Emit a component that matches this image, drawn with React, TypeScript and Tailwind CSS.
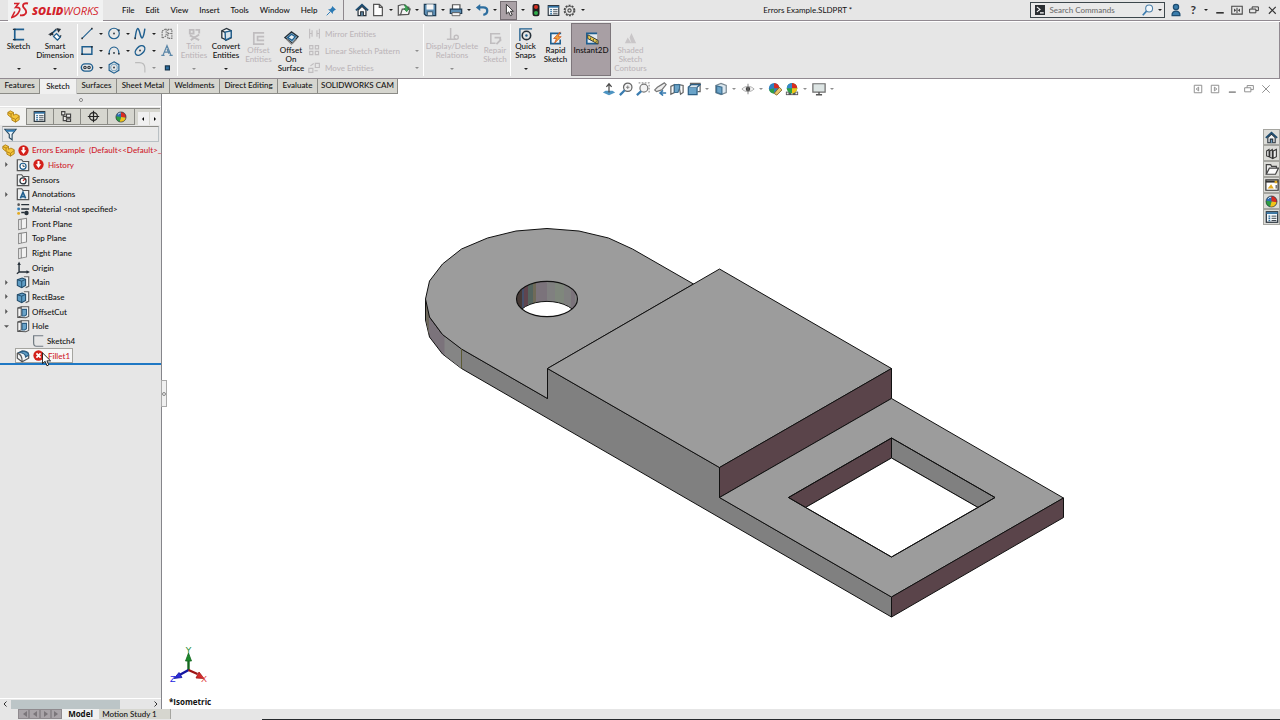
import type { ReactNode } from "react";

const BLUE = "#1f5f8f";
const DARK = "#27313a";
const FADE = "#c0bdbf";

function Icon({ children, className = "h-[14px] w-[14px]" }: { children: ReactNode; className?: string }) {
  return (
    <svg viewBox="0 0 16 16" fill="none" strokeWidth="1.4" aria-hidden="true" className={`shrink-0 ${className}`}>
      {children}
    </svg>
  );
}

function Caret({ faded = false }: { faded?: boolean }) {
  return (
    <svg viewBox="0 0 4 2" aria-hidden="true" className="h-[2px] w-1 shrink-0">
      <path d="M0 0h4L2 2z" fill={faded ? "#8f8f8f" : "#202020"} />
    </svg>
  );
}

/* ---------- shared drawings ---------- */

const Home = ({ className }: { className?: string }) => (
  <Icon className={className}>
    <path d="M3.500 8v6.500h9V8L8 3.800z" fill="#f7f7f7" stroke={DARK} />
    <path d="M1 8.500L8 2l7 6.500" stroke="#1d4c70" strokeWidth="2" />
    <path d="M6.500 14.500v-4.500h3v4.500" fill="#6f9fc0" stroke={DARK} />
  </Icon>
);

const Globe = ({ className }: { className?: string }) => (
  <Icon className={className}>
    <circle cx="8" cy="8" r="6.800" fill="#2c6fb5" />
    <path d="M8 8V1.200A6.800 6.800 0 0 1 14.600 9z" fill="#d92b20" />
    <path d="M8 8l6.600 1A6.800 6.800 0 0 1 6 14.500z" fill="#f0c419" />
    <path d="M8 8l-2 6.500A6.800 6.800 0 0 1 1.300 7z" fill="#2f9e44" />
    <path d="M4 4.500a5 5 0 0 1 3.500-2" stroke="#fff" strokeWidth="1.200" />
    <circle cx="8" cy="8" r="6.800" stroke="#333" strokeWidth=".8" />
  </Icon>
);

const Part = ({ className }: { className?: string }) => (
  <Icon className={className}>
    <path d="M1 6V3l3-2 4 2v3.500L11 5l4 2v5l-4.500 3L6 12.500V10z" fill="#f5c53a" stroke="#a87710" strokeWidth="1" />
    <path d="M1 3l4 2v4M5 5l3-2M6 9.500l4.500 2V15M10.500 11.500L15 8" stroke="#a87710" strokeWidth="1" />
  </Icon>
);

const ListIcon = ({ className }: { className?: string }) => (
  <Icon className={className}>
    <rect x="1.500" y="2" width="13" height="12" fill="#f4f8fb" stroke={DARK} />
    <path d="M1.500 3.500h13" stroke="#2d6e9f" strokeWidth="2" />
    <path d="M4 7h2M4 9.500h2M4 12h2" stroke="#2d6e9f" strokeWidth="1.600" />
    <path d="M7.500 7H13M7.500 9.500H13M7.500 12H13" stroke={DARK} strokeWidth="1" />
  </Icon>
);

/* ---------- title bar ---------- */

function Logo() {
  return (
    <div className="flex h-[21px] w-[95px] shrink-0 items-center bg-[#f1f2f2] pl-[3px]" aria-label="SOLIDWORKS">
      <svg viewBox="0 0 18 18" className="h-[18px] w-[18px]" fill="none" stroke="#d3232b" strokeWidth="1.600" aria-hidden="true">
        <path d="M3 2.500h4.500L4.500 6.500c4-.5 5 1 3.800 3.600C7 13.200 4 15.500.8 16.500l3-6" />
        <path d="M17 2.500c-3-.8-5.200.4-5 2.600.3 2.400 3.600 3.200 3.200 6-.3 2.600-3.200 3.700-6.200 3.100" strokeWidth="1.900" />
      </svg>
      <span className="ml-[3px] font-['Open_Sans',sans-serif] text-[11px] italic leading-none text-[#d3232b]">
        <b className="font-extrabold">SOLID</b>WORKS
      </span>
    </div>
  );
}

const menus = ["File", "Edit", "View", "Insert", "Tools", "Window", "Help"];

function QuickButton({ label, caret, active, children }: { label: string; caret?: boolean; active?: boolean; children: ReactNode }) {
  return (
    <div className="flex h-full items-center gap-1">
      <button aria-label={label} className={`flex h-[19px] items-center justify-center ${active ? "w-[17px] border border-[#766f74] bg-[#aaa1a6]" : "w-[15px]"}`}>
        {children}
      </button>
      {caret && <Caret />}
    </div>
  );
}

function TitleBar() {
  return (
    <header className="flex h-[21px] shrink-0 items-center border-b border-[#918a91] bg-[#e6e6e6]">
      <div className="w-2 shrink-0" />
      <Logo />
      <nav className="ml-[19px] flex w-[204px] shrink-0 items-center gap-[11px]">
        {menus.map((m) => (
          <button key={m} className="leading-none">{m}</button>
        ))}
      </nav>
      <button aria-label="Pin menu">
        <Icon className="h-[11px] w-[11px]">
          <path d="M9 1.500l5.500 5.500-2 .5-2.500 2.500v3L3 6h3l2.500-2.500z" fill="#2d7bb5" />
          <path d="M6.500 9.500L1 15" stroke="#2d7bb5" />
        </Icon>
      </button>
      <div className="ml-[6px] h-full w-px bg-[#8d878c]" />
      <div className="ml-[10px] flex h-full shrink-0 items-center gap-[1px]">
        <QuickButton label="Home"><Home className="h-[14px] w-[14px]" /></QuickButton>
        <div className="flex h-full items-center gap-[3px]">
          <QuickButton label="New" caret>
            <Icon><path d="M3 1.500h6.500L13 5v9.500H3z" fill="#fdfdfd" stroke="#555" /><path d="M9.500 1.500V5H13" stroke="#555" /></Icon>
          </QuickButton>
          <QuickButton label="Open" caret>
            <Icon>
              <path d="M1.500 3v11l3-1 9-.5V5l-3-.5L9 2H5z" fill="#eee" stroke="#555" />
              <path d="M4 13.500L6 7h9l-2 6z" fill="#f3f3f3" stroke="#555" />
              <path d="M8 2.500c3 0 4 1 4 4h2L11 10 8 6.500h2" fill="#3aa655" stroke="#237a38" strokeWidth=".8" />
            </Icon>
          </QuickButton>
          <QuickButton label="Save" caret>
            <Icon>
              <path d="M1.500 1.500h13v13h-11l-2-2z" fill="#5d8fb5" stroke="#1f3d55" />
              <path d="M4 1.500h8v6H4z" fill="#f6f6f6" /><path d="M5 10h6v4.500H5z" fill="#dfe6ea" stroke="#1f3d55" strokeWidth=".8" />
            </Icon>
          </QuickButton>
          <QuickButton label="Print" caret>
            <Icon>
              <path d="M4 7V2h8.500v5" fill="#fff" stroke="#555" />
              <path d="M1.500 7h13v5h-13z" fill="#5d8fb5" stroke="#1f3d55" />
              <path d="M3.500 11h9v3.500h-9z" fill="#f4f4f4" stroke="#555" strokeWidth="1" />
            </Icon>
          </QuickButton>
          <QuickButton label="Undo" caret>
            <Icon><path d="M5 5h4.500c6 0 6 7.500 0 8.500" stroke="#2d6e9f" strokeWidth="2.600" /><path d="M1 5l5-4v8z" fill="#2d6e9f" /></Icon>
          </QuickButton>
          <QuickButton label="Select" caret active>
            <Icon><path d="M5 1.500v11l2.600-2.300 2 4.300 2-1-2-4H13z" fill="#fff" stroke="#333" strokeWidth="1.100" /></Icon>
          </QuickButton>
          <QuickButton label="Rebuild">
            <Icon><rect x="4" y="1" width="8" height="14" rx="2.500" fill="#202020" /><circle cx="8" cy="4.500" r="2.300" fill="#d62f22" /><circle cx="8" cy="11.300" r="2.300" fill="#2fae4b" /></Icon>
          </QuickButton>
          <QuickButton label="File properties"><ListIcon className="h-[13px] w-[13px]" /></QuickButton>
        </div>
        <QuickButton label="Options" caret>
          <Icon className="h-[13px] w-[13px]">
            <circle cx="8" cy="8" r="6.200" stroke="#4c4c4c" strokeWidth="2" strokeDasharray="2.500 1.400" />
            <circle cx="8" cy="8" r="5" fill="#ececec" stroke="#4c4c4c" strokeWidth="1" /><circle cx="8" cy="8" r="2" stroke="#4c4c4c" />
          </Icon>
        </QuickButton>
      </div>
      <h1 className="flex-1 whitespace-nowrap text-center font-normal leading-none">Errors Example.SLDPRT *</h1>
      <div className="flex shrink-0 items-center">
        <label className="flex h-4 w-[135px] items-center border border-[#3d474c] bg-[#e9e9e9] pl-1 pr-[2px]">
          <Icon className="h-[10px] w-[10px]"><rect width="16" height="16" fill="#2b2f33" /><path d="M3 3l5 4-5 4M8 12.500h6" stroke="#fff" strokeWidth="1.800" /></Icon>
          <input placeholder="Search Commands" aria-label="Search Commands" className="ml-1 w-0 flex-1 bg-transparent leading-none outline-none placeholder:text-[#6e6e6e]" />
          <Icon className="mr-1 h-3 w-3"><circle cx="9.500" cy="6" r="4.600" fill="#f2f8fc" stroke="#4d7fa8" /><path d="M6 9.500L1 15" stroke="#3a7cb0" strokeWidth="2.200" /></Icon>
          <Caret />
        </label>
        <button aria-label="Account" className="ml-1">
          <Icon className="h-[14px] w-[14px]"><circle cx="8" cy="4.500" r="3" fill="#3a7cab" stroke="#1d4c70" /><path d="M3.500 14.500c-1-7 10-7 9 0z" fill="#3a7cab" stroke="#1d4c70" /></Icon>
        </button>
        <button aria-label="Help" className="ml-[7px] text-[12px] font-bold leading-none text-[#333]">?</button>
        <span className="ml-2"><Caret /></span>
        <div className="ml-[7px] mr-[3px] flex items-center gap-[6px]">
          <button aria-label="Minimize"><Icon className="h-[10px] w-[10px]"><path d="M2 12.500h12" stroke="#333" strokeWidth="2.600" /></Icon></button>
          <button aria-label="Span displays"><Icon className="h-3 w-3"><path d="M1 3h14v10.500H1zM8 5v7" stroke="#444" /><path d="M7 8.300L4 6v4.600zM9 8.300L12 6v4.600z" fill="#444" /></Icon></button>
          <button aria-label="Restore"><Icon className="h-[10px] w-[10px]"><path d="M5 6V3h10v6h-4M1 6.500h10v6H1z" stroke="#333" strokeWidth="1.500" /></Icon></button>
          <button aria-label="Close" className="ml-[2px]"><Icon className="h-[10px] w-[10px]"><path d="M3 3l11 11M14 3L3 14" stroke="#333" strokeWidth="1.800" /></Icon></button>
        </div>
      </div>
    </header>
  );
}

/* ---------- ribbon ---------- */

type CommandProps = {
  lines: string[];
  width: string;
  low?: boolean;
  caret?: boolean;
  disabled?: boolean;
  active?: boolean;
  children: ReactNode;
};

function Command({ lines, width, low, caret, disabled, active, children }: CommandProps) {
  return (
    <button
      disabled={disabled}
      className={`flex h-full shrink-0 flex-col items-center ${width} ${low ? "pt-2" : "pt-1"} ${
        active ? "bg-[#a89fa4] ring-1 ring-inset ring-[#7d767b]" : ""
      } ${disabled ? "text-[#bdb6ba]" : ""}`}
    >
      <Icon className="h-[15px] w-[15px]">{children}</Icon>
      <span className="flex flex-col whitespace-nowrap text-center leading-[9px]">
        {lines.map((l) => (
          <span key={l}>{l}</span>
        ))}
      </span>
      {caret && <span className="mt-auto pb-[6px]"><Caret faded={disabled} /></span>}
    </button>
  );
}

const Divider = () => <div className="h-[52px] w-px shrink-0 self-center bg-white" />;

const B = { stroke: BLUE, strokeWidth: 1.4 };
const Dot = ({ x, y }: { x: number; y: number }) => <rect x={x - 1} y={y - 1} width="2" height="2" fill={DARK} />;

const tools: { name: string; caret?: boolean; faded?: boolean; art: ReactNode }[] = [
  { name: "Line", caret: true, art: <><path d="M2 14L14 2" {...B} /><Dot x={2} y={14} /><Dot x={14} y={2} /></> },
  { name: "Circle", caret: true, art: <><circle cx="8" cy="8" r="6.500" {...B} /><Dot x={8} y={8} /><Dot x={14} y={4} /></> },
  { name: "Spline", caret: true, art: <><path d="M2 14C4-2 6 0 8 8s4 8 6-6" {...B} strokeWidth="1.800" /><Dot x={2} y={14} /></> },
  { name: "Plane", art: <path d="M2 5l5-3v9l-5 3zM9 3h5v11H9M9 3v11M9 8h5" stroke="#777" strokeDasharray="2 1" /> },
  { name: "Rectangle", caret: true, art: <><path d="M2 3.500h12v9H2z" {...B} strokeWidth="1.800" /><Dot x={2} y={12.5} /><Dot x={14} y={3.5} /></> },
  { name: "Arc", caret: true, art: <><path d="M2 12C2 1 14 1 14 12" {...B} /><Dot x={2} y={12} /><Dot x={14} y={12} /><Dot x={8} y={11} /></> },
  { name: "Ellipse", caret: true, art: <><ellipse cx="8" cy="8" rx="7" ry="4.500" transform="rotate(-45 8 8)" {...B} strokeWidth="1.800" /><Dot x={8} y={8} /></> },
  { name: "Text", art: <path d="M1 14h4M11 14h4M3 14L8 2l5 12M5 10h6M10.500 12L8 6" stroke="#5c87a8" strokeWidth="1.500" /> },
  { name: "Slot", caret: true, art: <><rect x="1" y="3.500" width="14" height="9" rx="4.500" {...B} strokeWidth="1.700" /><circle cx="5.500" cy="8" r="1.500" stroke={DARK} /><circle cx="10.500" cy="8" r="1.500" stroke={DARK} /></> },
  { name: "Polygon", art: <><path d="M8 1l6 3.500v7L8 15l-6-3.500v-7z" {...B} /><circle cx="8" cy="8" r="4" stroke="#7fa9c6" /><Dot x={8} y={8} /></> },
  { name: "Fillet", caret: true, faded: true, art: <path d="M2 2h5c5 0 7 3 7 7v5" stroke="#bbb" /> },
  { name: "Point", art: <rect x="6" y="6" width="5" height="5" fill="#2d6e9f" stroke="#16334a" /> },
];

function Ribbon() {
  return (
    <section aria-label="Sketch commands" className="flex h-[58px] shrink-0 border-b border-[#918a91] bg-[#e6e6e6] py-[2px] shadow-[inset_0_1px_0_#fff,inset_-1px_0_0_#918a91]">
      <Command lines={["Sketch"]} width="w-[37px]" caret>
        <path d="M14 2.500H4v11h10" {...B} strokeWidth="1.800" /><path d="M2 2.500h3M2 13.500h3" stroke={DARK} />
      </Command>
      <Command lines={["Smart", "Dimension"]} width="w-9" caret>
        <path d="M2 9L9 2M14 9l-4 5" stroke={DARK} /><path d="M3 8l6-5M9 7l4 4-3 3-4-4z" {...B} fill="#fff" /><path d="M0 8l5-3 1 4zM9 1l5 1-3 4z" fill={DARK} />
      </Command>
      <div className="ml-1 flex"><Divider /></div>
      <div className="ml-[2px] grid shrink-0 grid-cols-[27px_26px_27px_16px] grid-rows-3 pt-[2px]">
        {tools.map((t) => (
          <button key={t.name} aria-label={t.name} className="flex items-center gap-[5px]">
            <Icon className="h-[13px] w-[14px]">{t.art}</Icon>
            {t.caret && <Caret faded={t.faded} />}
          </button>
        ))}
      </div>
      <div className="ml-px flex"><Divider /></div>
      <Command lines={["Trim", "Entities"]} width="w-8" caret disabled>
        <path d="M3 3h4v4H3zM9 3h4v4M3 9l10 5M13 8L4 14" stroke={FADE} strokeWidth="2" />
      </Command>
      <Command lines={["Convert", "Entities"]} width="w-8" caret>
        <path d="M3 4l5-2.500L13 4v7.500L8 14l-5-2.500z" fill="#f4f4f4" stroke={DARK} /><path d="M3 4l4 2v8M7 6l6-2" stroke={DARK} /><path d="M6.500 5.500L13 4v7l-6 3z" fill="#d9e3ea" stroke={BLUE} />
      </Command>
      <Command lines={["Offset", "Entities"]} width="w-[33px]" low disabled>
        <path d="M14 2H3v12h11M14 6H7v4h7" stroke={FADE} strokeWidth="1.800" />
      </Command>
      <Command lines={["Offset", "On", "Surface"]} width="w-8" low>
        <path d="M1 7l7-6 7 5-6 7z" fill="#9cc0d8" stroke={DARK} /><path d="M4 7l4-3.500L12 6 8.500 10z" fill="#e9f1f6" stroke={BLUE} /><path d="M3 9l5 5 5-5" stroke="#888" />
      </Command>
      <ul className="ml-[1px] grid w-[115px] shrink-0 grid-rows-3 pt-[2px] text-[#bdb6ba]">
        {["Mirror Entities", "Linear Sketch Pattern", "Move Entities"].map((t, i) => (
          <li key={t}>
            <button disabled className="flex h-full w-full items-center pr-1">
              <Icon className="h-[13px] w-[13px]">
                {i === 0 && <path d="M2 2v12M2 8h3M5 4v8M14 2v12M14 8h-3M11 4v8" stroke={FADE} />}
                {i === 1 && <path d="M2 2h4v4H2zM9 2h4v4H9zM2 9h4v4H2zM9 9h4v4H9z" stroke={FADE} />}
                {i === 2 && <path d="M1 9h5v5H1zM9 3h5v5H9zM3 6l4-3M12 12H8" stroke={FADE} />}
              </Icon>
              <span className="ml-1 whitespace-nowrap leading-none">{t}</span>
              {i > 0 && <span className="ml-auto"><Caret faded /></span>}
            </button>
          </li>
        ))}
      </ul>
      <Divider />
      <Command lines={["Display/Delete", "Relations"]} width="w-[56px]" caret disabled>
        <path d="M6 1v12M2 13h10" stroke={FADE} strokeWidth="1.600" /><circle cx="12" cy="11" r="2.200" stroke={FADE} />
      </Command>
      <Command lines={["Repair", "Sketch"]} width="w-[30px]" low disabled>
        <path d="M13 3H3v10h5" stroke={FADE} strokeWidth="1.700" /><path d="M7 7h6v4M9 14l5-5" stroke={FADE} strokeWidth="2" />
      </Command>
      <Divider />
      <Command lines={["Quick", "Snaps"]} width="w-[29px]" caret>
        <path d="M2 15V2h13" {...B} /><circle cx="9" cy="9" r="4.500" stroke={DARK} strokeWidth="1.700" /><circle cx="9" cy="9" r="1.300" fill={BLUE} />
      </Command>
      <Command lines={["Rapid", "Sketch"]} width="w-[31px]" low>
        <path d="M14 2.500H3v11h10V9" {...B} strokeWidth="1.700" fill="#f3f7fa" /><path d="M13 1L6 8h3l-2 5 7-7h-3z" fill="#f2a23a" stroke="#c8501b" strokeWidth=".8" />
      </Command>
      <Command lines={["Instant2D"]} width="w-10" low active>
        <path d="M14 2.500H3v11h11" fill="#e3eaef" {...B} strokeWidth="1.700" /><path d="M4 4l11 6v4L4 8z" fill="#f3d04a" stroke={DARK} strokeWidth="1" /><path d="M7 7v2M10 8.500v2M13 10v2" stroke={DARK} strokeWidth=".8" />
      </Command>
      <Command lines={["Shaded", "Sketch", "Contours"]} width="w-[39px]" low disabled>
        <path d="M2 13l3-6 4 6zM9 2l5 11H9L7 7z" fill="#c9c6c8" />
      </Command>
    </section>
  );
}

/* ---------- tab strip and view toolbar ---------- */

const tabs: [string, string][] = [
  ["Features", "w-10"],
  ["Sketch", "w-[37px]"],
  ["Surfaces", "w-10"],
  ["Sheet Metal", "w-[53px]"],
  ["Weldments", "w-[50px]"],
  ["Direct Editing", "w-[58px]"],
  ["Evaluate", "w-10"],
  ["SOLIDWORKS CAM", "w-[80px]"],
];

const views: { name: string; caret?: boolean; art: ReactNode }[] = [
  { name: "Normal to", art: <><path d="M1 12l3-2h8l3 2-7 3z" fill="#4d94c2" /><path d="M8 12V3M5 5.500L8 2l3 3.500" stroke="#4a4a4a" /></> },
  { name: "Zoom to fit", art: <><circle cx="10" cy="6" r="4.800" fill="#f4f4f4" stroke="#666" /><path d="M6.500 9.500L1 15" stroke="#3a7cb0" strokeWidth="2.600" /><path d="M8 6h4M10 4v4" stroke="#777" strokeWidth="1" /></> },
  { name: "Zoom to area", art: <><path d="M3 1h12v12" stroke="#999" strokeDasharray="2 1.500" /><circle cx="9" cy="7" r="4.500" fill="#f4f4f4" stroke="#777" /><path d="M6 10.500L1 15" stroke="#3a7cb0" strokeWidth="2.600" /></> },
  { name: "Previous view", art: <><path d="M13 1l2 2-5 6-6 2-2-2 3-3z" fill="#eee" stroke="#777" /><path d="M15 12.500H9m2.500-3L8 12.500l3.500 3" stroke="#3a7cb0" strokeWidth="1.800" /></> },
  { name: "Section view", art: <><path d="M1 5l4-2v9l-4 2zM10 3l5 1v8l-3 2z" fill="#fafafa" stroke="#666" /><path d="M5 3h6v4L9 12H5z" fill="#6aa3c8" stroke="#3f6f90" /></> },
  { name: "View orientation", caret: true, art: <><path d="M4 5V1.500h11V11h-3" fill="#fff" stroke="#666" /><path d="M1.500 6h10v8.500h-10z" fill="#6aa3c8" stroke="#2d5f85" /><path d="M1.500 6L5 3h10l-3.500 3" fill="#dce8f0" stroke="#2d5f85" /></> },
  { name: "Display style", caret: true, art: <><path d="M2 4l6-2.500L14 4v8l-6 2.500L2 12z" fill="#dce8f0" stroke="#7b8a94" /><path d="M3 4.500L9 6v8l-6-2z" fill="#6aa3c8" stroke="#3f6f90" /></> },
  { name: "Hide and show", caret: true, art: <><path d="M1 8c4-4 10-4 14 0-4 4-10 4-14 0z" fill="#f4f4f4" stroke="#a5a5a5" strokeWidth="1" /><circle cx="8" cy="8" r="2.600" fill="#444" /><path d="M8 2v12" stroke="#777" strokeWidth="1" /></> },
  { name: "Edit appearance", art: <><circle cx="7" cy="7" r="6" fill="#2f7fc1" /><path d="M7 7V1a6 6 0 0 1 6 6z" fill="#d92b20" /><path d="M7 7L1.200 8.500A6 6 0 0 0 7 13z" fill="#2f9e44" /><path d="M7 13l6-7 3 3-6 6z" fill="#e9c46a" stroke="#7b6424" strokeWidth="1" /></> },
  { name: "Apply scene", caret: true, art: <><path d="M1 11h14v4H1z" fill="#555" /><path d="M2 13h2M7 13h2M12 13h2" stroke="#eee" strokeWidth="2" /><circle cx="8" cy="7" r="6" fill="#2f9e44" /><path d="M8 7V1a6 6 0 0 1 6 6z" fill="#d92b20" /><path d="M8 7V1a6 6 0 0 0-6 6z" fill="#3487cc" /><path d="M8 7h6a6 6 0 0 1-6 6z" fill="#f0c419" /></> },
  { name: "View settings", caret: true, art: <><path d="M1 2h14v9.500H1z" fill="#dde5e4" stroke="#6d6d6d" /><path d="M8 11.500V14M4.500 14.500h7" stroke="#555" strokeWidth="1.600" /></> },
];

function TabStrip() {
  return (
    <div className="relative z-10 flex h-[15px] shrink-0">
      <nav className="flex shrink-0" role="tablist">
        {tabs.map(([t, w]) => (
          <button
            key={t}
            role="tab"
            aria-selected={t === "Sketch"}
            className={`${w} whitespace-nowrap border-r pb-[2px] text-center leading-none ${
              t === "Sketch" ? "border-[#c9c9c9] bg-[#f0f0f0]" : "border-b border-[#8b8b86] bg-[#d6d6cf]"
            }`}
          >
            {t}
          </button>
        ))}
      </nav>
      <div className="ml-[204px] flex items-start pt-[3px]">
        {views.map((v) => (
          <button key={v.name} aria-label={v.name} className={`flex items-center gap-1 ${v.caret ? "w-[27px]" : "w-[17px]"}`}>
            <Icon>{v.art}</Icon>
            {v.caret && <Caret faded />}
          </button>
        ))}
      </div>
      <div className="ml-auto flex items-start gap-[7px] pr-[9px] pt-[5px]">
        {[
          ["Collapse left", "M2 2h12v12H2zM9 5L5 8l4 3z"],
          ["Collapse right", "M2 2h12v12H2zM7 5l4 3-4 3z"],
          ["Minimize document", "M3 12.500h11M3 13.500h11"],
          ["Restore document", "M5 6V2.500h10V9h-4M1 6h10v6.500H1z"],
          ["Close document", "M2 2l12 12M14 2L2 14"],
        ].map(([n, d]) => (
          <button key={n} aria-label={n}>
            <Icon className="h-[10px] w-[10px]"><path d={d} stroke="#8c8c8c" strokeWidth="1.500" /></Icon>
          </button>
        ))}
      </div>
    </div>
  );
}

/* ---------- feature tree ---------- */

const Folder = ({ children }: { children: ReactNode }) => (
  <Icon><path d="M1.500 2h5l1.500 2h6.500v10.500h-13z" fill="#eef0f1" stroke="#555" />{children}</Icon>
);
const Plane = () => <Icon><path d="M3 3l9-1.500v11L3 14.500zM6 2.500V14" fill="#f2f2f2" stroke="#888" strokeWidth="1.200" /></Icon>;
const Body = () => (
  <Icon>
    <path d="M9 2h5.500v11L11 14.500" fill="#f5f5f5" stroke="#666" />
    <path d="M1.500 5.500L7 3.500l4 1.500v7l-4.500 2.500L1.500 12z" fill="#5e9cc4" stroke="#1f4968" strokeWidth="1.200" /><path d="M1.500 5.500L6.500 7v7.500M6.500 7L11 5" stroke="#1f4968" strokeWidth="1" />
  </Icon>
);
const Cut = () => (
  <Icon>
    <path d="M2 3.500L6 2v10.500L2 14zM6 2h8.500v11L11 14.500 2 14" fill="#f5f5f5" stroke="#555" strokeWidth="1.200" />
    <path d="M7 5h5v6l-2 1.500H7z" fill="#6aa3c8" stroke="#2d5f85" strokeWidth="1.200" /><path d="M2 3.500h4" stroke="#555" />
  </Icon>
);
const RebuildMark = () => <Icon className="h-[11px] w-[11px]"><circle cx="8" cy="8" r="7.500" fill="#d3201a" /><path d="M6.500 3h3v4.500H12L8 13 4 7.500h2.500z" fill="#fff" /></Icon>;
const ErrorMark = () => <Icon className="h-[11px] w-[11px]"><circle cx="8" cy="8" r="7.500" fill="#d3201a" /><path d="M5 5l6 6M11 5l-6 6" stroke="#fff" strokeWidth="2.600" /></Icon>;

type Row = { name: string; icon: ReactNode; mark?: ReactNode; arrow?: "closed" | "open"; red?: boolean; indent?: boolean; picked?: boolean };

const rows: Row[] = [
  { name: "History", arrow: "closed", red: true, mark: <RebuildMark />, icon: <Folder><circle cx="8" cy="9.500" r="3.500" fill="#fff" stroke={BLUE} /><path d="M8 7.500v2h2" stroke={DARK} strokeWidth="1" /></Folder> },
  { name: "Sensors", icon: <Folder><circle cx="8" cy="9" r="3.500" fill="#fff" stroke={DARK} /><path d="M8 9l2.500-2.500" stroke="#d3201a" /></Folder> },
  { name: "Annotations", arrow: "closed", icon: <Folder><path d="M5 13l3-7 3 7M6 11h4" stroke={BLUE} strokeWidth="1.800" /></Folder> },
  { name: "Material <not specified>", icon: <Icon><circle cx="3" cy="3" r="1.500" fill="#555" /><circle cx="3" cy="8" r="1.700" fill="#2d7bb5" /><circle cx="3" cy="13" r="1.700" fill="#e2a91f" /><path d="M6 3h9M6 8h9M6 12h4" stroke={DARK} strokeWidth="1.700" /><circle cx="12" cy="12.500" r="2.500" fill={DARK} /></Icon> },
  { name: "Front Plane", icon: <Plane /> },
  { name: "Top Plane", icon: <Plane /> },
  { name: "Right Plane", icon: <Plane /> },
  { name: "Origin", icon: <Icon><path d="M3.500 3v9.500H13M1 14.500l2.500-2" stroke={DARK} strokeWidth="1.600" /><path d="M1.500 4.500l2-4 2 4zM12 10.500l4 2-4 2z" fill={DARK} /></Icon> },
  { name: "Main", arrow: "closed", icon: <Body /> },
  { name: "RectBase", arrow: "closed", icon: <Body /> },
  { name: "OffsetCut", arrow: "closed", icon: <Cut /> },
  { name: "Hole", arrow: "open", icon: <Cut /> },
  { name: "Sketch4", indent: true, icon: <Icon><path d="M14 2H3v8c0 3 1 4 3 4h8" stroke="#707a82" /></Icon> },
  { name: "Fillet1", red: true, picked: true, mark: <ErrorMark />, icon: <Icon><path d="M1.500 5L7 2.500c4 0 7.500 1.500 7.500 4.500v3.500L7 14.500l-5.500-4z" fill="#f1f3f4" stroke="#555" /><path d="M4 4l3-1.500c4 0 7.500 1.500 7.500 4.500L11 9C11 6 8 4.500 4 4z" fill="#5f9dc4" stroke="#2d5f85" /><path d="M1.500 5c4 .5 5.500 3 5.500 9.500" stroke="#555" /></Icon> },
];

function TreeRow({ row }: { row: Row }) {
  return (
    <li className={`relative flex items-center ${row.indent ? "pl-[30px]" : "pl-[15px]"}`}>
      {row.arrow && (
        <button aria-label={`Expand ${row.name}`} className="absolute left-1">
          <svg viewBox="0 0 4 4" className="h-[5px] w-[5px]" aria-hidden="true">
            <path d={row.arrow === "open" ? "M0 1h4L2 3z" : "M1 0l2 2-2 2z"} fill="#555" />
          </svg>
        </button>
      )}
      <button className={`flex h-full items-center gap-[2px] pr-[2px] ${row.red ? "text-[#cf202a]" : ""} ${row.picked ? "border border-[#a5a5a0] bg-[#f6f6f6]" : "border border-transparent"}`}>
        {row.icon}
        {row.mark && <span className="pl-px pr-[2px]">{row.mark}</span>}
        <span className="whitespace-nowrap leading-none">{row.name}</span>
      </button>
      {row.picked && (
        <svg viewBox="0 0 10 16" className="absolute left-[42px] top-1 z-20 h-[15px] w-[9px]" aria-hidden="true">
          <path d="M.5.5v12l3-2.500 2 5 2-1-2-4.500h4z" fill="#fff" stroke="#111" strokeWidth="1" />
        </svg>
      )}
    </li>
  );
}

function FeaturePanel() {
  return (
    <aside className="relative flex w-[162px] shrink-0 flex-col border-r border-[#85858a] bg-[#e6e6e6]">
      <div className="flex h-[13px] items-center justify-center border-b border-white">
        <span className="h-[4px] w-[4px] rounded-full border border-[#808080] bg-white" />
      </div>
      <div role="tablist" className="mt-px flex h-[17px] shrink-0 pr-[1px]">
        {[
          ["Feature tree", <Part key="p" className="h-[13px] w-[13px]" />],
          ["Properties", <ListIcon key="l" className="h-[13px] w-[13px]" />],
          ["Configurations", <Icon key="c" className="h-[13px] w-[13px]"><path d="M2 2h4v4H2zM8 5h5v4H8zM8 11h5v3H8zM4 6v7h4M4 8h4" stroke="#444" fill="#eee" /></Icon>],
          ["Dimensions", <Icon key="d" className="h-[13px] w-[13px]"><circle cx="8" cy="8" r="4.800" stroke="#222" strokeWidth="1.500" /><path d="M8 1v14M1 8h14" stroke="#222" strokeWidth="1.500" /></Icon>],
          ["Appearances", <Globe key="g" className="h-[12px] w-[12px]" />],
        ].map(([n, icon], i) => (
          <button
            key={n as string}
            role="tab"
            aria-label={n as string}
            aria-selected={i === 0}
            className={`flex items-center justify-center ${i === 0 ? "w-[26px] bg-[#f2f2f0]" : "w-[27px] border-b border-l border-t border-[#8b8b86] bg-[#d6d6cf] pr-px"}`}
          >
            {icon}
          </button>
        ))}
        <div className="flex flex-1 items-end border-l border-t border-[#8b8b86] bg-[#d6d6cf]">
          <button aria-label="Scroll tabs left" className="ml-[3px] flex h-[13px] flex-1 items-center justify-center bg-[#f0f0f0]">
            <svg viewBox="0 0 4 4" className="h-1 w-1"><path d="M3 0L1 2l2 2z" /></svg>
          </button>
          <button aria-label="Scroll tabs right" className="ml-px flex h-[13px] flex-1 items-center justify-center bg-[#f0f0f0]">
            <svg viewBox="0 0 4 4" className="h-1 w-1"><path d="M1 0l2 2-2 2z" /></svg>
          </button>
        </div>
      </div>
      <label className="mx-[2px] mt-px flex h-[16px] shrink-0 items-center border border-[#b9c0c4] border-t-[#8b8b86] bg-[#e9e9e9] pl-[1px]">
        <Icon className="h-[13px] w-[13px]"><path d="M1 1.500h14L10 8v6.500L6.500 12V8z" fill="#e8f1f7" stroke="#2b4c63" /><path d="M2 2.500h12l-2 2H4z" fill="#2d7bb5" /></Icon>
        <input aria-label="Filter" className="w-0 flex-1 bg-transparent outline-none" />
      </label>
      <ul className="mt-[1px] grid h-[220px] shrink-0 auto-rows-fr">
        <li className="flex items-center gap-[3px] whitespace-nowrap pl-[2px] text-[#cf202a]">
          <Part className="h-[13px] w-[13px]" />
          <RebuildMark />
          <span className="whitespace-pre leading-none">Errors Example  (Default&lt;&lt;Default&gt;_</span>
        </li>
        {rows.map((r) => (
          <TreeRow key={r.name} row={r} />
        ))}
      </ul>
      <div className="h-[2px] bg-[#1f78c4]" />
      <div className="mt-auto flex h-[11px] items-center border-t border-white px-[2px]">
        <button aria-label="Scroll left" className="w-[9px]"><svg viewBox="0 0 6 6" className="h-[6px] w-[6px]" fill="none" stroke="#333"><path d="M4.500.5L2 3l2.500 2.500" /></svg></button>
        <div className="h-[9px] w-[109px] bg-[#bcc5c7]" />
        <button aria-label="Scroll right" className="ml-auto"><svg viewBox="0 0 6 6" className="h-[6px] w-[6px]" fill="none" stroke="#333"><path d="M1.500.5L4 3 1.500 5.500" /></svg></button>
      </div>
      <button aria-label="Collapse panel" className="absolute -right-[6px] top-[286px] z-10 flex h-[27px] w-[6px] items-center justify-center border border-[#a9a9a9] bg-[#f0f0f0]">
        <span className="h-1 w-1 rounded-full border border-[#888]" />
      </button>
    </aside>
  );
}

/* ---------- model ---------- */

const arcTop = "461.5,349 442.5,334.500 429.500,317 425.500,299 429.500,281 442.500,264 461.500,249 487.500,238 516,231 547,228.500 579,231 608.500,238 632.500,249";

function Model() {
  return (
    <svg viewBox="162 94 1118 615" className="min-h-0 w-full flex-1" role="img" aria-label="Part model">
      <g stroke="#111" strokeWidth="1" strokeLinejoin="round">
        <polygon fill="#7b737b" points="425.500,299 429.500,317 442.500,334.500 461.500,349 461.500,368.500 442.500,354 429.500,337 425.500,320" />
        <polygon stroke="none" fill="#858585" points="444.500,336.500 461,349 461,368 444.500,355" />
        <polygon stroke="none" fill="#6d685c" points="426,301 429,317 429,335 426,320" />
        <polygon fill="#808080" points="461.500,349 547.500,398.500 547.500,368.500 719.500,467.500 719.500,497.500 891.500,597 891.500,617 461.500,368.500" />
        <polygon fill="#9c9c9c" points={`${arcTop} 693.500,284 547.500,368.500 547.500,398.500`} />
        <path d="M461.500 349v19.500" stroke="#5c5a34" />
        <polygon fill="#9c9c9c" points="547.500,368.500 719.500,269 891.500,368.500 719.500,467.500" />
        <polygon fill="#5a444a" points="719.500,467.500 891.500,368.500 891.500,398.500 719.500,497.500" />
        <polygon fill="#9c9c9c" points="719.500,497.500 891.500,398.500 1063.500,498 891.500,597" />
        <polygon fill="#5a444a" points="891.500,597 1063.500,498 1063.500,517.500 891.500,617" />
        <polygon fill="#5a444a" points="788.500,497.500 891.500,438 891.500,458 805.500,507.500" />
        <polygon fill="#808080" points="891.500,438 995,497.500 978,507.500 891.500,458" />
        <polygon fill="#fff" points="891.500,458 978,507.500 891.500,557 805.500,507.500" />
        <polygon fill="none" points="788.500,497.500 891.500,438 995,497.500 891.500,557" />
      </g>
      <clipPath id="bore"><ellipse cx="547" cy="299" rx="30.500" ry="17.600" /></clipPath>
      <g clipPath="url(#bore)">
        <path fill="#808080" d="M516 280h62v38h-62z" />
        <path fill="#463a36" d="M516 280h6v38h-6z" />
        <path fill="#46506a" d="M522 280h2v38h-2z" />
        <path fill="#5f454e" d="M524 280h4v38h-4z" />
        <path fill="#54645f" d="M528 280h5v38h-5z" />
        <path fill="#6f6a58" d="M533 280h3v38h-3z" />
        <path fill="#7b737b" d="M536 280h11v38h-11z" />
        <path fill="#7f877c" d="M555 280h9v38h-9z" />
        <path fill="#7b737b" d="M571 280h4v38h-4z" />
        <ellipse cx="547" cy="319" rx="30.500" ry="17.600" fill="#fff" stroke="#111" strokeWidth="1" />
      </g>
      <ellipse cx="547" cy="299" rx="30.500" ry="17.600" fill="none" stroke="#111" strokeWidth="1.100" />
      <g className="font-['Liberation_Sans',sans-serif] text-[9px]">
        <path d="M188.500 670v-12" stroke="#14661e" strokeWidth="2.400" />
        <path d="M188.500 653l3 8h-6z" fill="#1b8a2b" stroke="#14661e" strokeWidth=".8" />
        <path d="M188.500 670l-9 5" stroke="#1515a0" strokeWidth="2.400" />
        <path d="M174 678.500l5-6 3 5z" fill="#2b2bd8" stroke="#1515a0" strokeWidth=".8" />
        <path d="M188.500 670l9 4" stroke="#9c1515" strokeWidth="2.400" />
        <path d="M204 678.500l-8-.5 3-6z" fill="#d52b2b" stroke="#9c1515" strokeWidth=".8" />
        <text x="185.500" y="653" fill="#1b8a2b">Y</text>
        <text x="170" y="682" fill="#2323e0">Z</text>
        <text x="201" y="682" fill="#e04040">X</text>
      </g>
    </svg>
  );
}

function TaskPane() {
  const cell = "flex h-4 w-[17px] items-center justify-center border border-[#a5a5a0] bg-[#dcdcd8]";
  return (
    <div className="absolute right-0 top-[35px] flex flex-col">
      <button aria-label="Resources" className={cell}><Home className="h-[13px] w-[13px]" /></button>
      <button aria-label="Design library" className={cell}><Icon className="h-[13px] w-[13px]"><path d="M2 5l3-2v9l-3-1zM6 5l3-2v11l-3-1.500zM10 5l4-2v9l-4 2z" fill="#eee" stroke="#333" strokeWidth="1.300" /></Icon></button>
      <button aria-label="File explorer" className={cell}><Icon><path d="M1.500 14V3h5l1 2H13v2" fill="#eee" stroke="#444" /><path d="M1.500 14L5 7h10.500L12 14z" fill="#fafafa" stroke="#444" /></Icon></button>
      <button aria-label="View palette" className={cell}><Icon><path d="M1 2h14v12H1z" fill="#fff" stroke="#333" /><path d="M1 4h14" stroke="#333" strokeWidth="2.500" /><path d="M3 12l4-5 3 5zM11 3h3v3h-3z" fill="#e2a91f" /><path d="M12 8h2v4h-2z" fill="#777" /></Icon></button>
      <button aria-label="Appearances and scenes" className={cell}><Globe className="h-[13px] w-[13px]" /></button>
      <button aria-label="Custom properties" className={cell}><ListIcon className="h-[14px] w-[14px]" /></button>
    </div>
  );
}

/* ---------- page ---------- */

export default function App() {
  return (
    <div className="flex h-screen flex-col overflow-hidden bg-white font-['Lato','Noto_Sans',sans-serif] text-[8px] font-medium text-[#111]">
      <TitleBar />
      <Ribbon />
      <TabStrip />
      <main className="flex min-h-0 flex-1">
        <FeaturePanel />
        <section className="relative flex min-w-0 flex-1 flex-col">
          <Model />
          <TaskPane />
          <span className="absolute bottom-[3px] left-[7px] font-['Open_Sans',sans-serif] font-bold leading-none">*Isometric</span>
        </section>
      </main>
      <footer className="shrink-0 bg-[#e6e6e6]">
        <div className="flex h-[10px]">
          <div className="flex pl-[18px]">
            {["M7 1L3 4l4 3z", "M6 1L2 4l4 3z", "M2 1l4 3-4 3z", "M1 1l4 3-4 3z"].map((d, i) => (
              <button key={d} aria-label={`Scroll study tabs ${i + 1}`} className="flex w-[11px] items-center justify-center border border-[#8f8a8e] bg-[#a9a4a8]">
                <svg viewBox="0 0 8 8" className="h-2 w-2"><path d={d} fill="#7b767a" /></svg>
              </button>
            ))}
          </div>
          <button className="w-[37px] bg-[#f0f0f0] font-['Open_Sans',sans-serif] font-bold leading-none">Model</button>
          <button className="w-[72px] whitespace-nowrap border-r border-[#a5a5a0] bg-[#d6d6cf] pr-[10px] leading-none">Motion Study 1</button>
        </div>
        <div className="ml-[262px] h-px bg-[#25292c]" />
      </footer>
    </div>
  );
}
